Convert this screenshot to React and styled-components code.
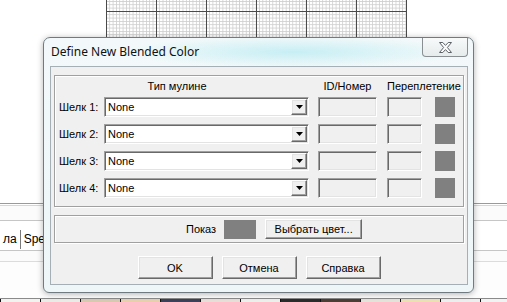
import React from "react";
import styled, { createGlobalStyle } from "styled-components";

const GlobalStyle = createGlobalStyle`
html, body {
  margin: 0;
  padding: 0;
  background: #fff;
}
body {
  font-family: "Liberation Sans", Arial, sans-serif;
  font-size: 11px;
  color: #000;
}
`;

let Screen = styled.div`
position: relative;
width: 507px;
height: 302px;
overflow: hidden;
display: flex;
flex-direction: column;
background: #fff;
`;

let Canvas = styled.div`
flex: none;
margin-left: 106px;
width: 301px;
height: 46px;
background:
  linear-gradient(90deg, #4a4a4a 1px, transparent 1px) 0 0 / 50px 50px,
  linear-gradient(#4a4a4a 1px, transparent 1px) 0 11px / 50px 50px,
  linear-gradient(90deg, #cfcfcf 1px, transparent 1px) 0 0 / 3.333px 3.333px,
  linear-gradient(#cfcfcf 1px, transparent 1px) 0 1px / 3.333px 3.333px;
`;

let Spacer = styled.div`
flex: 1;
`;

let Panel = styled.div`
flex: none;
height: 99px;
display: flex;
flex-direction: column;
background: #fbfbfb;
`;

let Rule = styled.div`
flex: none;
height: 1px;
background: ${p => p.$c || "#c8c8c8"};
`;

let Band = styled.div`
flex: none;
height: ${p => p.$h}px;
background: ${p => p.$bg || "#fbfbfb"};
`;

let TabStrip = styled.div`
flex: none;
height: 28px;
display: flex;
align-items: flex-end;
padding-bottom: 1px;
background: #fff;
`;

let Tab = styled.div`
height: 19px;
line-height: 18px;
padding: 0 3px;
font-size: 12px;
border-right: 1px solid #7a7a7a;
`;

let Swatches = styled.div`
flex: none;
height: 4px;
display: flex;
`;

let Chip = styled.div`
flex: none;
width: 39px;
background: ${p => p.$c};
border-left: 1px solid #111;
`;

let Dialog = styled.div`
position: absolute;
left: 43px;
top: 37px;
width: 431px;
height: 256px;
box-sizing: border-box;
border: 1px solid #6f7b80;
border-radius: 7px 7px 6px 6px;
background:
  radial-gradient(ellipse 170px 16px at 250px 14px, rgba(196, 238, 244, 0.95), rgba(196, 238, 244, 0) 100%),
  linear-gradient(#f3f9fa, #eef6f8);
box-shadow: 0 1px 6px rgba(0, 0, 0, 0.3);
display: flex;
flex-direction: column;
`;

let TitleBar = styled.div`
flex: none;
height: 28px;
display: flex;
justify-content: space-between;
align-items: flex-start;
`;

let Title = styled.div`
padding: 6px 0 0 7px;
font-family: "Noto Sans", "Open Sans", sans-serif;
font-size: 12px;
line-height: 16px;
color: #111;
`;

let Close = styled.div`
width: 46px;
height: 19px;
margin-right: 5px;
box-sizing: border-box;
border: 1px solid #8a8f92;
border-top: none;
border-radius: 0 0 4px 4px;
background: linear-gradient(#f8fafa, #e6ebec);
display: flex;
align-items: center;
justify-content: center;
`;

let Client = styled.div`
flex: none;
margin-left: 6px;
width: 418px;
height: 219px;
box-sizing: border-box;
border: 1px solid #a4b0b5;
background: #f0f0f0;
padding: 8px 0 0 3px;
display: flex;
flex-direction: column;
`;

let Group = styled.div`
flex: none;
width: 410px;
height: ${p => p.$h}px;
box-sizing: border-box;
border: 1px solid #a0a0a0;
box-shadow: inset 1px 1px 0 #fff, 1px 1px 0 #fff;
`;

let BlendGroup = styled(Group)`
padding: 2px 0 0 4px;
display: flex;
flex-direction: column;
`;

let HeadRow = styled.div`
height: 15px;
display: flex;
align-items: center;
`;

let Head = styled.div`
flex: none;
width: ${p => p.$w}px;
margin-left: ${p => p.$ml || 0}px;
padding-right: ${p => p.$pr || 0}px;
box-sizing: border-box;
text-align: center;
white-space: nowrap;
`;

let Rows = styled.div`
margin-top: 4px;
display: flex;
flex-direction: column;
gap: 7px;
`;

let Row = styled.div`
height: 20px;
display: flex;
align-items: center;
`;

let Label = styled.div`
flex: none;
width: 45px;
`;

const sunken = `
box-sizing: border-box;
border-style: solid;
border-width: 1px;
border-color: #a0a0a0 #fff #fff #a0a0a0;
box-shadow: inset 1px 1px 0 #696969, inset -1px -1px 0 #e3e3e3;
`;

const raised = `
box-sizing: border-box;
border-style: solid;
border-width: 1px;
border-color: #fff #696969 #696969 #fff;
box-shadow: inset -1px -1px 0 #a0a0a0, inset 1px 1px 0 #e3e3e3;
background: #f0f0f0;
`;

let Combo = styled.div`
${sunken}
flex: none;
width: 205px;
height: 20px;
background: #fff;
display: flex;
align-items: center;
justify-content: space-between;
padding-left: 3px;
`;

let DropBtn = styled.div`
${raised}
width: 16px;
height: 16px;
margin-right: 1px;
display: flex;
align-items: center;
justify-content: center;
`;

let Field = styled.div`
${sunken}
flex: none;
width: ${p => p.$w}px;
height: 20px;
margin-left: ${p => p.$ml}px;
background: #f0f0f0;
`;

let Swatch = styled.div`
flex: none;
width: ${p => p.$w || 20}px;
height: ${p => p.$h || 20}px;
margin-left: ${p => p.$ml}px;
background: #808080;
`;

let ShowGroup = styled(Group)`
margin-top: 8px;
padding-left: 131px;
display: flex;
align-items: center;
`;

let Button = styled.div`
${raised}
flex: none;
width: ${p => p.$w || 75}px;
height: ${p => p.$h || 23}px;
margin-left: ${p => p.$ml || 0}px;
display: flex;
align-items: center;
justify-content: center;
`;

let ButtonRow = styled.div`
width: 410px;
margin-top: 13px;
display: flex;
justify-content: center;
gap: 9px;
`;

function CloseGlyph() {
  return (
    <svg width="15" height="11" viewBox="0 0 15 11">
      <polygon
        points="1.5,0.5 4.8,0.5 7.5,3.4 10.2,0.5 13.5,0.5 9.4,5.5 13.5,10.5 10.2,10.5 7.5,7.6 4.8,10.5 1.5,10.5 5.6,5.5"
        fill="#fcfcfc"
        stroke="#5c6266"
        strokeWidth="1"
      />
    </svg>
  );
}

function Arrow() {
  return (
    <svg width="7" height="4" viewBox="0 0 7 4">
      <polygon points="0,0 7,0 3.5,4" fill="#000" />
    </svg>
  );
}

function SilkRow({ n }) {
  return (
    <Row>
      <Label>Шелк {n}:</Label>
      <Combo>
        <span>None</span>
        <DropBtn>
          <Arrow />
        </DropBtn>
      </Combo>
      <Field $w={59} $ml={9} />
      <Field $w={35} $ml={10} />
      <Swatch $ml={13} />
    </Row>
  );
}

const chips = [
  "#f4f2ee", "#ecebe6", "#d9c9b0", "#e9cfae", "#3e3f58", "#eadcd6",
  "#eeeeea", "#2c2c2c", "#4d3d34", "#e6e2da", "#ece0b4", "#eeeeee", "#f2f2f2"
];

export default function App() {
  return (
    <>
      <GlobalStyle />
      <Screen>
        <Canvas />
        <Spacer />
        <Panel>
          <Rule $c="#9a9a9a" />
          <Band $h={1} $bg="#fff" />
          <Rule $c="#d6d6d6" />
          <Band $h={14} />
          <Rule $c="#c6c6c6" />
          <TabStrip>
            <Tab>ла</Tab>
            <Tab>Spe</Tab>
          </TabStrip>
          <Rule $c="#c6c6c6" />
          <Band $h={10} />
          <Rule $c="#dcdcdc" />
          <Band $h={36} $bg="#fdfdfd" />
          <Rule $c="#8a8a8a" />
          <Swatches>
            {chips.map((c, i) => <Chip key={i} $c={c} />)}
          </Swatches>
        </Panel>

        <Dialog>
          <TitleBar>
            <Title>Define New Blended Color</Title>
            <Close>
              <CloseGlyph />
            </Close>
          </TitleBar>
          <Client>
            <BlendGroup $h={132}>
              <HeadRow>
                <Head $w={250} $pr={14}>Тип мулине</Head>
                <Head $w={59} $ml={9}>ID/Номер</Head>
                <Head $w={68} $ml={10}>Переплетение</Head>
              </HeadRow>
              <Rows>
                {[1, 2, 3, 4].map(n => <SilkRow key={n} n={n} />)}
              </Rows>
            </BlendGroup>
            <ShowGroup $h={28}>
              <span>Показ</span>
              <Swatch $w={32} $h={19} $ml={8} />
              <Button $w={97} $h={20} $ml={9}>Выбрать цвет...</Button>
            </ShowGroup>
            <ButtonRow>
              <Button>OK</Button>
              <Button>Отмена</Button>
              <Button>Справка</Button>
            </ButtonRow>
          </Client>
        </Dialog>
      </Screen>
    </>
  );
}
